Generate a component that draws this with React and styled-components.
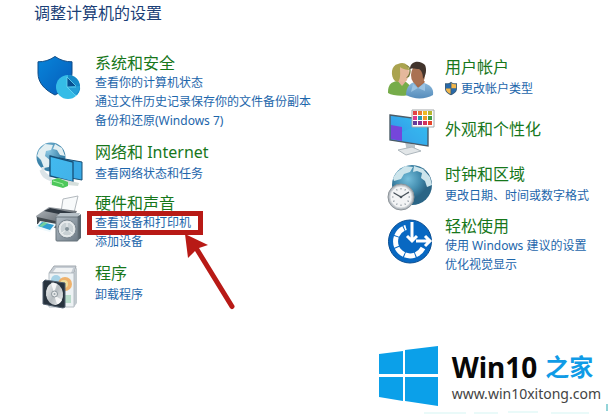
import React from "react";
import styled, { createGlobalStyle } from "styled-components";

const Global = createGlobalStyle`
  *, *::before, *::after { box-sizing: border-box; }
  body {
    margin: 0;
    background: #fff;
    font-family: "Noto Sans", "Noto Sans CJK SC", sans-serif;
    overflow-x: hidden;
  }
`;

const Page = styled.main`
  position: relative;
  min-height: 100vh;
  display: flex;
  flex-direction: column;
`;

const PageTitle = styled.h1`
  margin: 0;
  padding: 3px 34px 0;
  font-size: 16px;
  line-height: 20px;
  font-weight: 400;
  color: #1b3f77;
`;

const Columns = styled.div`
  display: grid;
  grid-template-columns: 351fr 224fr;
  align-items: start;
  padding-left: 36px;
`;

const Column = styled.div`
  display: flex;
  flex-direction: column;
  min-width: 0;
  padding-top: ${(p) => p.$top}px;
`;

const Category = styled.section`
  display: grid;
  grid-template-columns: 48px 1fr;
  column-gap: ${(p) => p.$inset}px;
  margin-top: ${(p) => p.$space}px;
`;

const Icon = styled.svg`
  display: block;
  width: 48px;
  height: 48px;
  overflow: visible;
`;

const CategoryBody = styled.div`
  padding-top: ${(p) => (p.$single ? 11 : 0)}px;
  white-space: nowrap;
`;

const Heading = styled.h2`
  margin: 0;
  font-size: 16px;
  line-height: 20px;
  font-weight: 400;
`;

const HeadingLink = styled.a`
  color: #17771b;
  text-decoration: none;
  &:hover { text-decoration: underline; }
`;

const TaskList = styled.ul`
  list-style: none;
  margin: 0;
  padding: ${(p) => (p.$loose ? 2 : 0)}px 0 0;
`;

const Task = styled.li`
  position: relative;
  display: flex;
  align-items: center;
  gap: 4px;
  width: max-content;
  height: 19px;
`;

const TaskLink = styled.a`
  font-size: 12px;
  line-height: 19px;
  color: #1d66ab;
  text-decoration: none;
  &:hover { text-decoration: underline; }
`;

const SmallShield = styled.svg`
  width: 12px;
  height: 15px;
`;

const Marker = styled.span`
  position: absolute;
  inset: -2px -12px -3px -8px;
  border: 5px solid #b81a16;
  pointer-events: none;
`;

const Arrow = styled.svg`
  position: absolute;
  top: 20px;
  left: 88px;
  width: 54px;
  height: 78px;
  pointer-events: none;
`;

const Brand = styled.footer`
  display: flex;
  align-items: center;
  align-self: flex-end;
  gap: 14px;
  margin-top: auto;
  padding: 0 10px 11px 0;
`;

const BrandMark = styled.svg`
  width: 59px;
  height: 60px;
`;

const BrandText = styled.div`
  white-space: nowrap;
`;

const BrandName = styled.div`
  display: flex;
  align-items: center;
  gap: 8px;
  height: 36px;
  font-size: 28px;
  line-height: 36px;
  font-weight: 700;
  color: #080808;
`;

const BrandSuffix = styled.span`
  font-size: 24px;
  color: #109be6;
`;

const BrandUrl = styled.a`
  display: block;
  font-size: 14px;
  line-height: 18px;
  color: #444;
  text-decoration: none;
`;

const Fringe = styled.svg`
  position: absolute;
  right: 0;
  bottom: 0;
  width: 195px;
  height: 14px;
`;

function SecurityIcon() {
  return (
    <Icon viewBox="0 0 48 48" aria-hidden="true">
      <defs>
        <linearGradient id="shieldFill" x1="0" y1="0" x2="1" y2="1">
          <stop offset="0" stopColor="#0785da" />
          <stop offset="1" stopColor="#075bb9" />
        </linearGradient>
      </defs>
      <path d="M19 3.5C14 7 8 9 2 8.800V20c0 10 7 17 17 22 10-5 17-12 17-22V8.800C30 9 24 7 19 3.500z" fill="url(#shieldFill)" stroke="#0f4b86" strokeWidth="1" />
      <circle cx="32" cy="34" r="12" fill="#35bce7" />
      <path d="M32 34V22a12 12 0 0 1 9 20z" fill="#1489c8" />
      <path d="M31 34V24l9 9z" fill="#074f91" />
      <path d="M32 34 39 42a12 12 0 0 0 5-9z" fill="#249fd7" />
      <path d="M31 24v10h9M31 34l9 9M31 24l9 9" fill="none" stroke="#6bd5f3" strokeWidth=".8" />
    </Icon>
  );
}

function NetworkIcon() {
  return (
    <Icon viewBox="0 0 48 48" aria-hidden="true">
      <defs>
        <radialGradient id="netGlobe" cx=".4" cy=".3">
          <stop offset="0" stopColor="#8bc7e2" />
          <stop offset="1" stopColor="#3a82a9" />
        </radialGradient>
        <linearGradient id="netScreen" x1="0" y1="0" x2="1" y2="1">
          <stop offset="0" stopColor="#41baf0" />
          <stop offset="1" stopColor="#43b2e8" />
        </linearGradient>
      </defs>
      <circle cx="15" cy="15" r="14.500" fill="url(#netGlobe)" />
      <path d="M3 8 9 2l8 1-2 5-5 1-1 5 6 5-2 6-5 1-3-8-4-4zM19 2l7 4 3 8-5-1-3-5-4-1z" fill="#e3eff2" />
      <path d="M5 28c2 7 6 9 14 11M7 25v5l8 7" fill="none" stroke="#dae3e7" strokeWidth="3" />
      <path d="m23 16 23 4v18l-23-4z" fill="#39a9e5" stroke="#194e73" />
      <path d="m14 14 23 6v20l-23-6z" fill="url(#netScreen)" stroke="#164f77" strokeWidth="1.300" />
      <path d="M14 40 22 36l21 5-1 3-11-1-4 2-12-2z" fill="#d6dfdc" />
      <path d="m16 38 6-2 10 4v4l-5 2-11-3z" fill="#4ec75b" />
      <path d="m17 39 10 3v2" fill="none" stroke="#a2f0a1" />
    </Icon>
  );
}

function HardwareIcon() {
  return (
    <Icon viewBox="0 0 48 48" aria-hidden="true">
      <defs>
        <linearGradient id="printerBody" x1="0" y1="0" x2="1" y2="1">
          <stop offset="0" stopColor="#b2b8be" />
          <stop offset="1" stopColor="#42494f" />
        </linearGradient>
        <linearGradient id="speakerBody" x1="0" y1="0" x2="1" y2="1">
          <stop offset="0" stopColor="#b3bdc5" />
          <stop offset="1" stopColor="#6d7a86" />
        </linearGradient>
      </defs>
      <path d="M25 19 27 6 42 3 37 24z" fill="#f8fafb" stroke="#b3b9be" />
      <path d="M0 23 13 14l28 4-4 8-15 10-20-7z" fill="url(#printerBody)" />
      <path d="m8 18 6-3 24 5-5 3z" fill="#303942" />
      <path d="M1 24 24 29v5L1 31z" fill="#42494e" />
      <path d="m4 28 17 3-7 8-15-4z" fill="#eef8fc" />
      <path d="m6 29 12 3-4 5-12-4z" fill="#319ed1" />
      <path d="m8 29 4 1-6 4-3-1z" fill="#72cf9e" />
      <path d="M20 24 24 20h20l-2 4z" fill="#b7c1c8" />
      <path d="m41 24 4-3v24l-4 3z" fill="#59656e" />
      <rect x="20" y="24" width="22" height="24" rx="1" fill="url(#speakerBody)" stroke="#68747d" />
      <circle cx="31" cy="36" r="9" fill="#dce1e4" stroke="#78848d" />
      <circle cx="31" cy="36" r="7" fill="#c8d0d4" stroke="#eef1f2" />
      <path d="M31 29v7l-5 4M31 36l5 4" fill="none" stroke="#eff2f3" strokeWidth="1" />
      <circle cx="31" cy="36" r="2" fill="#84929a" />
    </Icon>
  );
}

function ProgramsIcon() {
  return (
    <Icon viewBox="0 0 48 48" aria-hidden="true">
      <defs>
        <linearGradient id="discFill" x1="0" y1="0" x2="1" y2="1">
          <stop offset="0" stopColor="#f7f8f8" />
          <stop offset=".5" stopColor="#b6bcc0" />
          <stop offset="1" stopColor="#f1f2f2" />
        </linearGradient>
      </defs>
      <path d="M13 10 18 3h22l-2 7z" fill="#c6cdd4" stroke="#a3aab0" />
      <path d="m17 9 3-4h17l-2 5z" fill="#f1f3f4" />
      <path d="m38 10 3-6v36l-3 4z" fill="#c1c9ce" />
      <path d="M13 10h25v34H13z" fill="#edf2f4" stroke="#b6bec5" />
      <circle cx="20" cy="17" r="5" fill="#a7d2e6" />
      <circle cx="29" cy="21" r="7" fill="#efb26c" />
      <circle cx="28" cy="21" r="4" fill="#f1df9c" />
      <path d="M29 32h6v8h-7z" fill="#b9dccb" />
      <path d="m7 19 2-2 20 3v24l-2 1-20-4z" fill="#28333e" stroke="#536170" />
      <ellipse cx="18.500" cy="31" rx="8.500" ry="11" fill="url(#discFill)" transform="rotate(-8 18.500 31)" />
      <path d="m18 30-3-10c2-1 4 0 6 1zM18 32l3 9c2 0 4-2 5-4z" fill="#fff" opacity=".8" />
      <circle cx="18.500" cy="31" r="3" fill="#e8eaeb" stroke="#8d979d" />
      <circle cx="18.500" cy="31" r="1" fill="#9aa4aa" />
    </Icon>
  );
}

function AccountsIcon() {
  return (
    <Icon viewBox="0 0 48 48" aria-hidden="true">
      <defs>
        <linearGradient id="blueShirt" x1="0" y1="0" x2="0" y2="1">
          <stop offset="0" stopColor="#8cbadd" />
          <stop offset="1" stopColor="#568cbb" />
        </linearGradient>
      </defs>
      <path d="M1 35c0-7 3-10 9-11l9 1 7 6v6C17 40 6 39 1 36z" fill="#76ac4a" />
      <path d="m10 23 5 6 5-6-4-4-5 1z" fill="#e2b29a" />
      <ellipse cx="16" cy="16" rx="6" ry="9" fill="#e5b89c" />
      <path d="M8 24C3 19 4 8 11 7c6-3 11 1 11 6-5 0-9-3-9-3 0 7 1 11-2 15z" fill="#aaa34f" />
      <path d="M19 21c3-3 4-6 3-10l-3-3c5 1 6 6 3 12z" fill="#777638" />
      <path d="M19 38c0-8 4-12 9-13l9 1c6 2 10 5 9 12-7 4-18 5-27 0z" fill="url(#blueShirt)" />
      <path d="m26 24 5 7 7-6-4-5z" fill="#a86a48" />
      <ellipse cx="31" cy="18" rx="7" ry="10" fill="#aa7253" />
      <path d="M23 12C23 3 34 3 38 8c2 4 1 11-2 14 0-6-2-9-4-10-4 0-6-1-9 0z" fill="#42342c" />
      <path d="m26 27-2 8 7-4 7 3v-8l-7 5z" fill="#9bc3e3" />
    </Icon>
  );
}

function AppearanceIcon() {
  const colors = ["#e34343", "#e87932", "#efb925", "#b8b62e", "#d93c8c", "#259ab0", "#ec9b27", "#419b44", "#643d9a", "#8d308e", "#d3335c", "#e5442a"];
  return (
    <Icon viewBox="0 0 48 48" aria-hidden="true">
      <defs>
        <linearGradient id="deskScreen" x1="0" y1="1" x2="1" y2="0">
          <stop offset="0" stopColor="#3589e5" />
          <stop offset="1" stopColor="#33c6f3" />
        </linearGradient>
      </defs>
      <path d="m18 34 10 3v6h-8z" fill="#bac4cb" />
      <path d="m11 42 14-3 9 4-15 4z" fill="#e2e6e8" stroke="#aeb7bd" />
      <path d="M3 7 41 12v26L3 32z" fill="url(#deskScreen)" stroke="#4b5c68" strokeWidth="1.400" />
      <path d="m4 17 11 2v14L4 31z" fill="#7546db" />
      <path d="m15 24 25-11v24l-25-4z" fill="#38b8ed" opacity=".4" />
      <path d="M25 2h22v17H25z" fill="#fff" stroke="#a4a8aa" />
      {colors.map((color, i) => (
        <rect key={color} x={26 + (i % 4) * 5} y={3 + Math.floor(i / 4) * 5} width="4" height="4" fill={color} />
      ))}
    </Icon>
  );
}

function ClockIcon() {
  return (
    <Icon viewBox="0 0 48 48" aria-hidden="true">
      <defs>
        <radialGradient id="worldFill" cx=".4" cy=".35">
          <stop offset="0" stopColor="#75bfdc" />
          <stop offset=".6" stopColor="#448daf" />
          <stop offset="1" stopColor="#2a6586" />
        </radialGradient>
      </defs>
      <circle cx="25" cy="21" r="20" fill="url(#worldFill)" />
      <path d="m10 8 8-6 8 1-3 5-6 2-3 5-7 2-1-3zM27 2l9 3 7 8 2 8-5 2-2-6-4-3 1-5-5-2-4 1z" fill="#cde5ec" />
      <circle cx="14" cy="33" r="13" fill="#b7bdc3" stroke="#8d9499" />
      <circle cx="14" cy="33" r="11" fill="#f3f4f5" stroke="#d3d7da" />
      {Array.from({ length: 12 }, (_, i) => (
        <path key={i} d="M14 24v1.500" stroke="#88939b" transform={`rotate(${i * 30} 14 33)`} />
      ))}
      <path d="m7 29 7 4 8-5" fill="none" stroke="#49535b" strokeWidth="1.300" />
      <circle cx="14" cy="33" r="1.300" fill="#4b555d" />
    </Icon>
  );
}

function EaseIcon() {
  return (
    <Icon viewBox="0 0 48 48" aria-hidden="true">
      <circle cx="23" cy="25.500" r="21.500" fill="#0868c2" stroke="#074c91" />
      <path d="M36 32A14.500 14.500 0 1 1 19 11.500" fill="none" stroke="#fff" strokeWidth="5" strokeDasharray="10 1" />
      <path d="M25 6v19M20 20l5 5 5-5" fill="none" stroke="#fff" strokeWidth="3" />
      <path d="M29 25h14M38 20l5 5-5 5" fill="none" stroke="#fff" strokeWidth="3" />
    </Icon>
  );
}

function AdminShield() {
  return (
    <SmallShield viewBox="0 0 14 16" aria-hidden="true">
      <path d="M7 0C5 2 3 2 0 2v6c0 4 3 6 7 8 4-2 7-4 7-8V2c-3 0-5 0-7-2z" fill="#3b5d79" />
      <path d="M6.500 1.500C5 3 3 3 1 3v5h5.500z" fill="#276aab" />
      <path d="M7.500 1.500C9 3 11 3 13 3v5H7.500zM1 8h5.500v6.500C3 13 1 11 1 8z" fill="#f2b64b" />
      <path d="M7.500 8H13c0 3-2 5-5.500 6.500z" fill="#276aab" />
    </SmallShield>
  );
}

const left = [
  { title: "系统和安全", icon: SecurityIcon, space: 0, tasks: ["查看你的计算机状态", "通过文件历史记录保存你的文件备份副本", "备份和还原(Windows 7)"] },
  { title: "网络和 Internet", icon: NetworkIcon, space: 12, loose: true, tasks: ["查看网络状态和任务"] },
  { title: "硬件和声音", icon: HardwareIcon, space: 3, marked: true, tasks: ["查看设备和打印机", "添加设备"] },
  { title: "程序", icon: ProgramsIcon, space: 12, loose: true, tasks: ["卸载程序"] },
];

const right = [
  { title: "用户帐户", icon: AccountsIcon, space: 0, loose: true, admin: true, tasks: ["更改帐户类型"] },
  { title: "外观和个性化", icon: AppearanceIcon, space: 3, tasks: [] },
  { title: "时钟和区域", icon: ClockIcon, space: 8, loose: true, tasks: ["更改日期、时间或数字格式"] },
  { title: "轻松使用", icon: EaseIcon, space: 4, tasks: ["使用 Windows 建议的设置", "优化视觉显示"] },
];

function CategoryItem({ item, inset }) {
  const Picture = item.icon;
  return (
    <Category $space={item.space} $inset={inset}>
      <Picture />
      <CategoryBody $single={item.tasks.length === 0}>
        <Heading><HeadingLink href="#">{item.title}</HeadingLink></Heading>
        {item.tasks.length > 0 && (
          <TaskList $loose={item.loose}>
            {item.tasks.map((task, i) => (
              <Task key={task}>
                {item.admin && <AdminShield />}
                <TaskLink href="#">{task}</TaskLink>
                {item.marked && i === 0 && (
                  <>
                    <Marker />
                    <Arrow viewBox="0 0 54 78" aria-hidden="true">
                      <path d="M2 1 25 12 16 15 51 72a2 2 0 0 1-4 3L12 18 5 25z" fill="#b81a16" />
                    </Arrow>
                  </>
                )}
              </Task>
            ))}
          </TaskList>
        )}
      </CategoryBody>
    </Category>
  );
}

export default function App() {
  return (
    <>
      <Global />
      <Page>
        <PageTitle>调整计算机的设置</PageTitle>
        <Columns>
          <Column $top={30}>
            {left.map((item) => <CategoryItem key={item.title} item={item} inset={11} />)}
          </Column>
          <Column $top={34}>
            {right.map((item) => <CategoryItem key={item.title} item={item} inset={10} />)}
          </Column>
        </Columns>
        <Brand>
          <BrandMark viewBox="0 0 59 60" aria-hidden="true">
            <path d="M0 8 24 5v23H0zM26 4 59 0v28H26zM0 31h24v24L0 51zM26 31h33v29l-33-5z" fill="#0ba0e9" />
          </BrandMark>
          <BrandText>
            <BrandName>Win10<BrandSuffix>之家</BrandSuffix></BrandName>
            <BrandUrl href="#">www.win10xitong.com</BrandUrl>
          </BrandText>
        </Brand>
        <Fringe viewBox="0 0 195 14" aria-hidden="true">
          <path d="M8 10h42M58 10h24M92 9h30M135 10h38" stroke="#d5f5f3" strokeWidth="1" />
          <path d="M191 1v7" stroke="#27a9b2" strokeWidth="1" />
        </Fringe>
      </Page>
    </>
  );
}
